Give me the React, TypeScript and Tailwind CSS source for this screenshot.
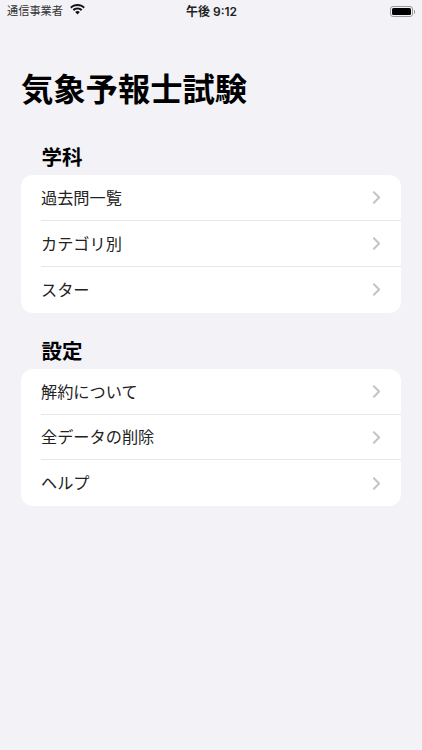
import { ChevronRight } from "lucide-react";

const SECTIONS = [
  { title: "学科", rows: ["過去問一覧", "カテゴリ別", "スター"] },
  { title: "設定", rows: ["解約について", "全データの削除", "ヘルプ"] },
];

const FONT = "font-['Inter','Noto_Sans_CJK_JP',sans-serif]";

function StatusBar() {
  return (
    <div className="relative flex h-[23px] items-center justify-between pl-[7px] pr-[7px] text-black">
      <div className="flex items-center gap-[7px]">
        <span className="text-[11.2px] leading-none text-[#333]">通信事業者</span>
        <svg width="15" height="11" viewBox="0 0 16 12" className="-mt-[3px]">
          <path d="M8 0C5 0 2.200 1.200 0 3.300l1.500 1.600C3.200 3.200 5.500 2.300 8 2.300s4.800.9 6.500 2.600L16 3.300C13.800 1.200 11 0 8 0z" fill="#111" />
          <path d="M8 3.900c-2 0-3.800.8-5.200 2.100l1.500 1.600c1-1 2.300-1.500 3.700-1.500s2.700.5 3.700 1.500L13.200 6C11.800 4.700 10 3.900 8 3.900z" fill="#111" />
          <path d="M8 7.700c-1 0-1.900.4-2.500 1L8 11.500l2.500-2.800c-.6-.6-1.500-1-2.500-1z" fill="#111" />
        </svg>
      </div>
      <span className="absolute left-[186px] text-[12px] font-semibold leading-none text-[#222]">午後 9:12</span>
      <div className="flex items-center gap-[1px]">
        <div className="flex h-[11px] w-[23px] items-center rounded-[3px] border border-[#999] p-[1px]">
          <div className="h-full w-full rounded-[1.5px] bg-black" />
        </div>
        <div className="h-[4px] w-[1px] rounded-r-sm bg-[#999]" />
      </div>
    </div>
  );
}

export default function App() {
  return (
    <div className={`${FONT} h-[750px] w-[422px] overflow-hidden bg-[#f2f2f7]`}>
      <StatusBar />
      <h1 className="mt-[45px] pl-[21px] text-[32.300px] font-bold leading-[44px] text-black">気象予報士試験</h1>
      <div className="mt-[32px] flex flex-col gap-[25px] px-[21px]">
        {SECTIONS.map((s) => (
          <section key={s.title}>
            <h2 className="mb-[3px] pl-[20.500px] text-[20.500px] font-bold leading-[28px] text-black">{s.title}</h2>
            <div className="overflow-hidden rounded-[12px] bg-white">
              {s.rows.map((r, i) => (
                <div key={r} className="relative flex h-[45.900px] items-center justify-between pl-[20px] pr-[14px]">
                  <span className="text-[16.200px] leading-none text-[#222]">{r}</span>
                  <ChevronRight size={21} strokeWidth={2.300} className="text-[#c4c4c7]" />
                  {i < s.rows.length - 1 ? (
                    <div className="absolute bottom-0 left-[20px] right-0 h-px bg-[#e6e6e8]" />
                  ) : null}
                </div>
              ))}
            </div>
          </section>
        ))}
      </div>
    </div>
  );
}
